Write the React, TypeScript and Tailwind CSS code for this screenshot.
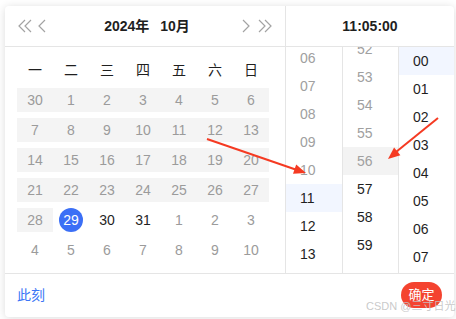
import React from 'react';

const weekdays = ['一', '二', '三', '四', '五', '六', '日'];

type Day = { n: number; kind: 'past' | 'cur' | 'next' | 'sel' };

const days: Day[] = [
  { n: 30, kind: 'past' },
  ...Array.from({ length: 28 }, (_, i) => ({ n: i + 1, kind: 'past' as const })),
  { n: 29, kind: 'sel' },
  { n: 30, kind: 'cur' },
  { n: 31, kind: 'cur' },
  ...Array.from({ length: 10 }, (_, i) => ({ n: i + 1, kind: 'next' as const })),
];

const pad = (n: number) => String(n).padStart(2, '0');

const Chevron = ({ dir, double }: { dir: 'l' | 'r'; double?: boolean }) => {
  const one = (x: number) =>
    dir === 'l' ? `M${x + 6} 1 L${x} 7 L${x + 6} 13` : `M${x} 1 L${x + 6} 7 L${x} 13`;
  return (
    <svg width={double ? 14 : 8} height="14" viewBox={`0 0 ${double ? 14 : 8} 14`} fill="none">
      <path d={one(1)} stroke="#a3a3a3" strokeWidth="1.2" />
      {double && <path d={one(7)} stroke="#a3a3a3" strokeWidth="1.2" />}
    </svg>
  );
};

type Tone = 'dim' | 'on' | 'sel' | 'hover';

const TimeColumn = ({
  items,
  offset,
  border,
  width,
}: {
  items: { label: string; tone: Tone }[];
  offset: string;
  border?: boolean;
  width: string;
}) => (
  <div className={`${width} h-full overflow-hidden ${border ? 'border-r border-[#e5e5e5]' : ''}`}>
    <div className={offset}>
      {items.map((it) => (
        <div
          key={it.label}
          className={`h-[28px] flex items-center pl-[14px] text-[14px] ${
            it.tone === 'dim'
              ? 'text-[#a0a0a0]'
              : it.tone === 'hover'
              ? 'text-[#a0a0a0] bg-[#f3f3f3]'
              : it.tone === 'sel'
              ? 'text-[#1f1f1f] bg-[#f2f6ff]'
              : 'text-[#1f1f1f]'
          }`}
        >
          {it.label}
        </div>
      ))}
    </div>
  </div>
);

export default function App() {
  const hours = [6, 7, 8, 9, 10, 11, 12, 13, 14].map((h) => ({
    label: pad(h),
    tone: (h < 11 ? 'dim' : h === 11 ? 'sel' : 'on') as Tone,
  }));
  const minutes = [52, 53, 54, 55, 56, 57, 58, 59].map((m) => ({
    label: pad(m),
    tone: (m < 56 ? 'dim' : m === 56 ? 'hover' : 'on') as Tone,
  }));
  const seconds = [0, 1, 2, 3, 4, 5, 6, 7, 8].map((s) => ({
    label: pad(s),
    tone: (s === 0 ? 'sel' : 'on') as Tone,
  }));

  return (
    <div
      className="w-[456px] h-[319px] bg-white relative pt-[6px] pl-[5px] overflow-hidden"
      style={{ fontFamily: '"Liberation Sans", "Noto Sans CJK SC", sans-serif' }}
    >
      <div className="w-[449px] h-[311px] bg-white rounded-[4px] shadow-[0_1px_8px_rgba(0,0,0,0.14)] flex flex-col">
        <div className="flex h-[267px]">
          {/* Date panel */}
          <div className="w-[281px] border-r border-[#e5e5e5] flex flex-col">
            <div className="h-[41px] border-b border-[#e5e5e5] flex items-center px-[13px]">
              <div className="flex items-center gap-[6px]">
                <Chevron dir="l" double />
                <Chevron dir="l" />
              </div>
              <div className="flex-1 flex justify-center text-[14px] font-semibold text-[#1f1f1f] pl-[6px]">
                <span>2024年</span>
                <span className="ml-[11px]">10月</span>
              </div>
              <div className="flex items-center gap-[8px]">
                <Chevron dir="r" />
                <Chevron dir="r" double />
              </div>
            </div>
            <div className="pt-[8px] pl-[12px]">
              <div className="grid grid-cols-7 w-[252px]">
                {weekdays.map((w) => (
                  <div key={w} className="h-[30px] flex items-center justify-center text-[14px] text-[#1f1f1f]">
                    {w}
                  </div>
                ))}
                {days.map((d, i) => (
                  <div key={i} className="h-[30px] flex items-center">
                    <div
                      className={`h-[24px] w-full flex items-center justify-center text-[14px] ${
                        d.kind === 'past' ? 'bg-[#f4f4f4] text-[#9b9b9b]' : ''
                      } ${d.kind === 'next' ? 'text-[#9b9b9b]' : ''} ${d.kind === 'cur' ? 'text-[#1f1f1f]' : ''}`}
                    >
                      {d.kind === 'sel' ? (
                        <span className="w-[24px] h-[24px] rounded-full bg-[#3b6ff6] text-white flex items-center justify-center">
                          {d.n}
                        </span>
                      ) : (
                        d.n
                      )}
                    </div>
                  </div>
                ))}
              </div>
            </div>
          </div>

          {/* Time panel */}
          <div className="flex-1 flex flex-col">
            <div className="h-[41px] border-b border-[#e5e5e5] flex items-center justify-center text-[14px] font-semibold text-[#1f1f1f]">
              11:05:00
            </div>
            <div className="flex flex-1 min-h-0">
              <TimeColumn items={hours} offset="-mt-[3px]" border width="w-[57px]" />
              <TimeColumn items={minutes} offset="-mt-[12px]" border width="w-[56px]" />
              <TimeColumn items={seconds} offset="mt-0" width="flex-1" />
            </div>
          </div>
        </div>

        {/* Footer */}
        <div className="h-[44px] border-t border-[#e5e5e5] flex items-center justify-between pl-[12px] pr-[12px]">
          <span className="text-[14px] text-[#3b76f6]">此刻</span>
          <button className="w-[41px] h-[26px] rounded-full bg-[#f4432f] text-white text-[13px] flex items-center justify-center -mt-[2px]">
            确定
          </button>
        </div>
      </div>

      {/* watermark */}
      <div className="absolute left-[366px] top-[299px] text-[11px] leading-[14px] text-[#c4c4c4]/90 whitespace-nowrap">
        CSDN @三寸日光呼
      </div>

      {/* annotation arrows */}
      <svg className="absolute left-0 top-0 pointer-events-none" width="456" height="319">
        <line x1="207" y1="139" x2="297" y2="170" stroke="#f53a22" strokeWidth="2" />
        <polygon points="306,173 293,173.8 296.2,164.4" fill="#f53a22" />
        <line x1="438" y1="118" x2="396" y2="152" stroke="#f53a22" strokeWidth="2" />
        <polygon points="388,159 394.1,147.5 400.4,155.3" fill="#f53a22" />
      </svg>
    </div>
  );
}
